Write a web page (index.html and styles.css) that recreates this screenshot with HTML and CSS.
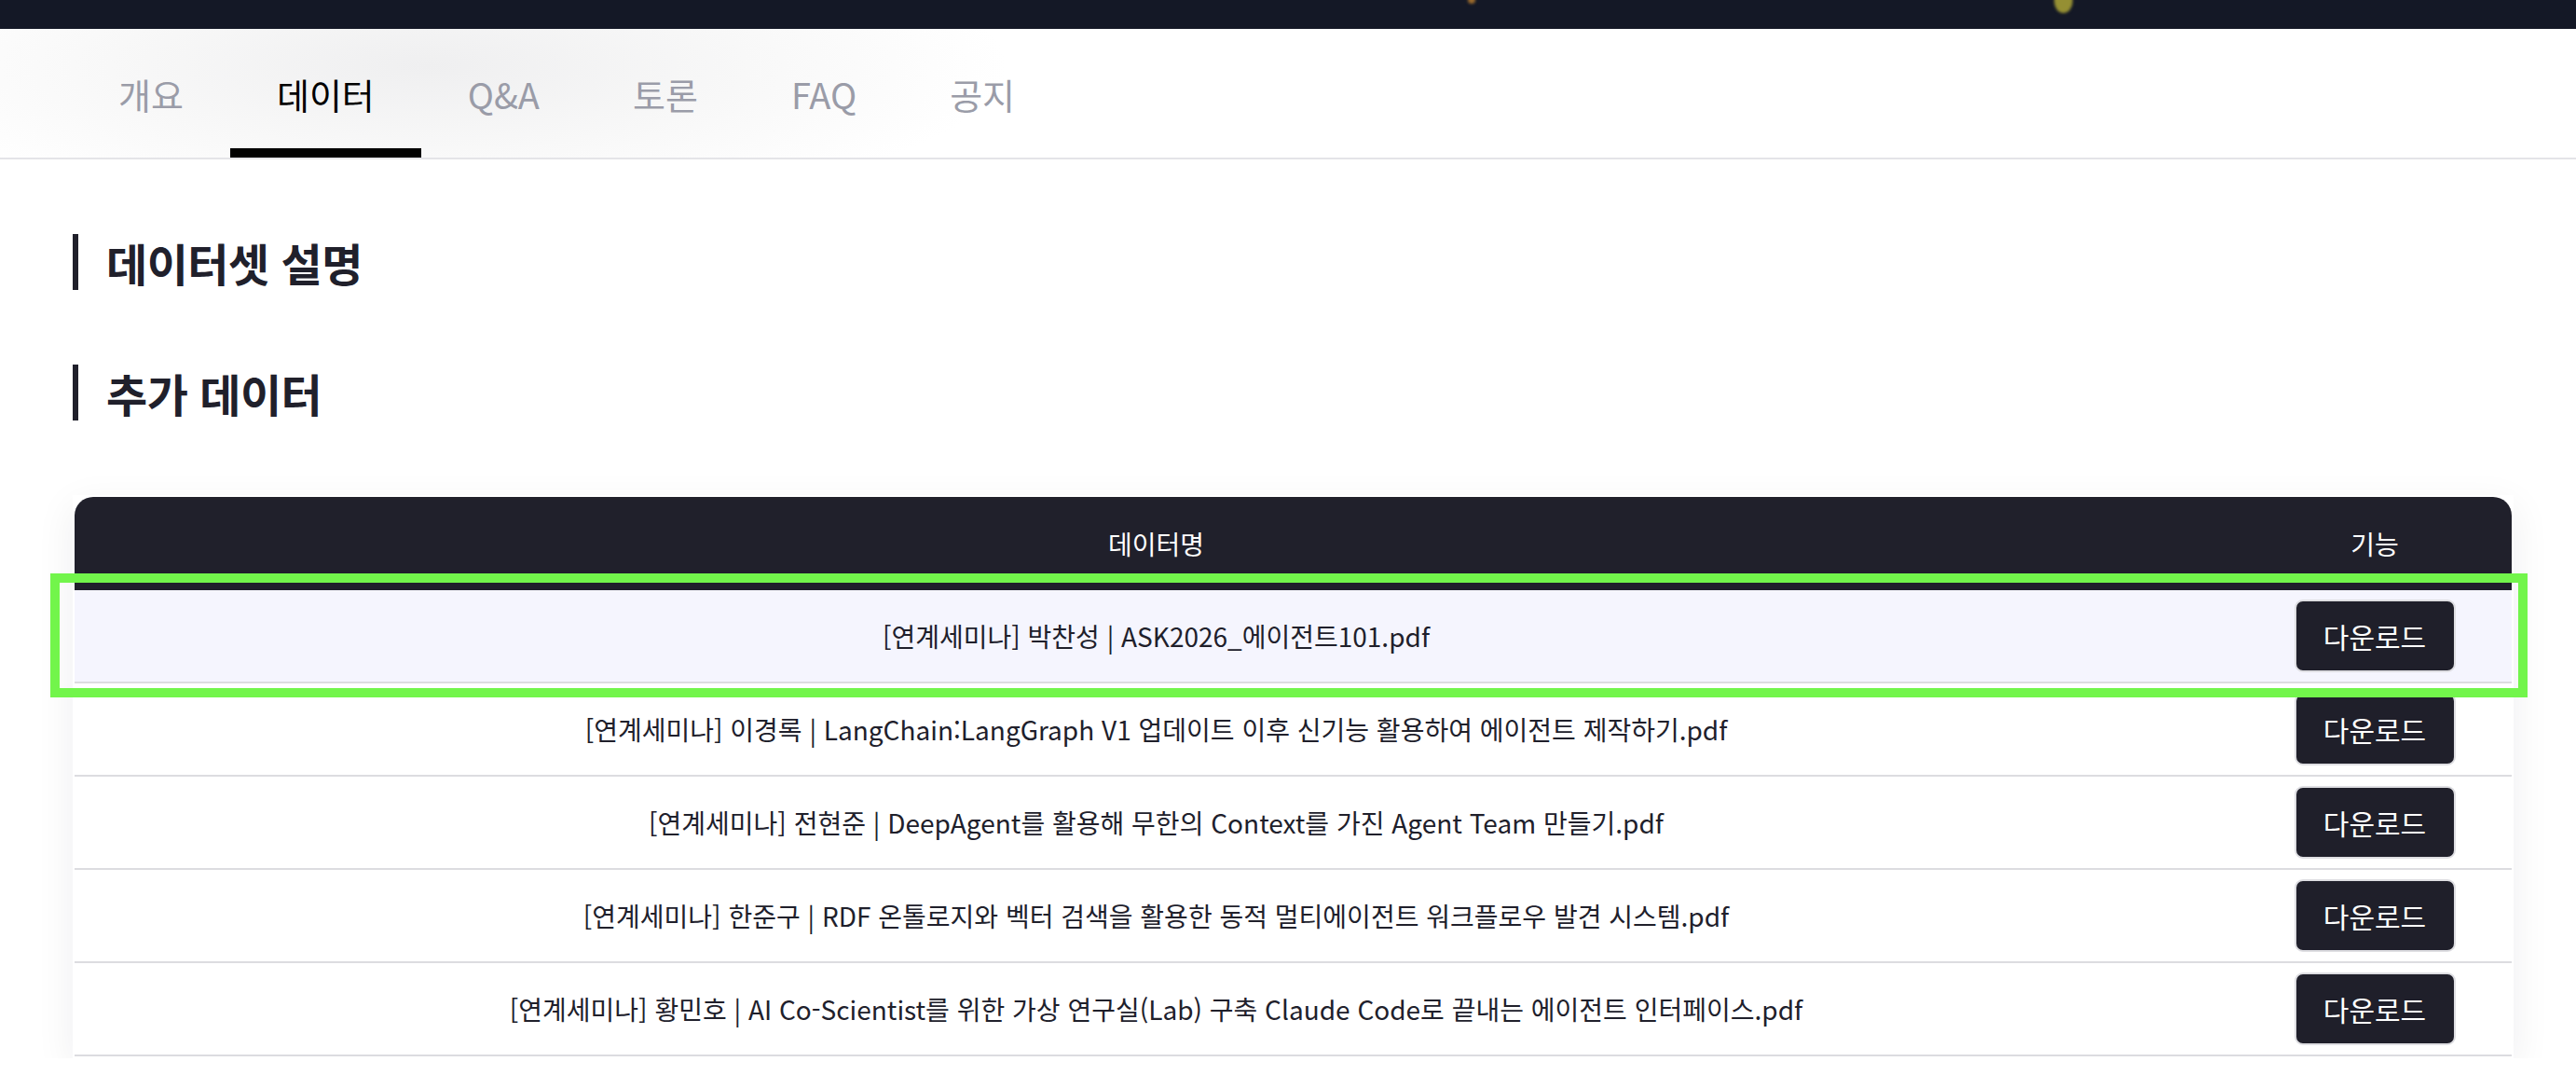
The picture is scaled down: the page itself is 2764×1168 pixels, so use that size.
FILE: index.html
```html
<!DOCTYPE html>
<html lang="ko">
  <head>
    <meta charset="UTF-8" />
    <meta name="viewport" content="width=device-width, initial-scale=1.0" />
    <title>데이터</title>
    <link rel="stylesheet" href="styles.css">
  </head>
  <body>
    <div class="hero">
      <span class="spark spark-orange"></span>
      <span class="spark spark-yellow"></span>
    </div>

    <nav class="tabs">
      <a class="tab" href="#">개요</a>
      <a class="tab active" href="#">데이터</a>
      <a class="tab" href="#">Q&amp;A</a>
      <a class="tab" href="#">토론</a>
      <a class="tab" href="#">FAQ</a>
      <a class="tab" href="#">공지</a>
    </nav>

    <main class="content">
      <h2 class="section-title">데이터셋 설명</h2>
      <h2 class="section-title">추가 데이터</h2>

      <div class="data-card">
        <div class="data-head">
          <div class="cell">데이터명</div>
          <div class="cell">기능</div>
        </div>
        <div class="data-row hover">
          <div class="cell">[연계세미나] 박찬성 | ASK2026_에이전트101.pdf</div>
          <div class="cell"><button class="btn">다운로드</button></div>
        </div>
        <div class="data-row">
          <div class="cell">[연계세미나] 이경록 | LangChain:LangGraph V1 업데이트 이후 신기능 활용하여 에이전트 제작하기.pdf</div>
          <div class="cell"><button class="btn">다운로드</button></div>
        </div>
        <div class="data-row">
          <div class="cell">[연계세미나] 전현준 | DeepAgent를 활용해 무한의 Context를 가진 Agent Team 만들기.pdf</div>
          <div class="cell"><button class="btn">다운로드</button></div>
        </div>
        <div class="data-row">
          <div class="cell">[연계세미나] 한준구 | RDF 온톨로지와 벡터 검색을 활용한 동적 멀티에이전트 워크플로우 발견 시스템.pdf</div>
          <div class="cell"><button class="btn">다운로드</button></div>
        </div>
        <div class="data-row">
          <div class="cell">[연계세미나] 황민호 | AI Co-Scientist를 위한 가상 연구실(Lab) 구축 Claude Code로 끝내는 에이전트 인터페이스.pdf</div>
          <div class="cell"><button class="btn">다운로드</button></div>
        </div>
      </div>
    </main>

    <!-- 선택된 행 표시 -->
    <div class="highlight"></div>
  </body>
</html>
```

FILE: styles.css
```css
body {
  margin: 0;
  padding: 0;
  background-color: #ffffff;
  font-family: "Noto Sans CJK KR", "Noto Sans", sans-serif;
  color: #20202b;
  overflow: hidden;
}

/* 상단 배너 끝부분 */
.hero {
  position: relative;
  height: 31px;
  background-color: #141826;
  overflow: hidden;
}

.spark {
  position: absolute;
  border-radius: 50%;
  filter: blur(1.5px);
}

.spark-orange {
  left: 1575px;
  top: -4px;
  width: 8px;
  height: 8px;
  background-color: #9a6a2c;
}

.spark-yellow {
  left: 2204px;
  top: -12px;
  width: 20px;
  height: 26px;
  background-color: #958f33;
}

/* 탭 메뉴 */
.tabs {
  display: flex;
  height: 138px;
  padding-left: 77px;
  border-bottom: 2px solid #e4e4e8;
  background: radial-gradient(ellipse 620px 160px at 460px 40px, #efeff0 0%, #f8f8f8 55%, rgba(255, 255, 255, 0) 100%);
}

.tab {
  display: flex;
  align-items: center;
  padding: 0 50px;
  border-top: 10px solid transparent;
  border-bottom: 10px solid transparent;
  font-size: 38px;
  color: #9a9ca8;
  text-decoration: none;
}

.tab.active {
  color: #000000;
  border-bottom-color: #000000;
}

/* 본문 */
.content {
  padding: 80px 67px 0 78px;
}

.section-title {
  margin: 0 0 80px;
  height: 60px;
  display: flex;
  align-items: center;
  padding-left: 30px;
  border-left: 6px solid #20202b;
  font-size: 48px;
  font-weight: 700;
  letter-spacing: -0.5px;
  color: #20202b;
}

.data-card {
  padding: 2px;
  background-color: #ffffff;
  box-shadow: 0 12px 40px rgba(20, 24, 40, 0.07);
}

.data-head,
.data-row {
  display: grid;
  grid-template-columns: 1fr 294px;
  height: 100px;
}

.data-head {
  background-color: #20202b;
  color: #ffffff;
  border-radius: 20px 20px 0 0;
}

.data-row {
  box-sizing: border-box;
  border-bottom: 2px solid #dcdce0;
  background-color: #ffffff;
}

.data-row.hover {
  background-color: #f5f5fe;
}

.cell {
  display: flex;
  align-items: center;
  justify-content: center;
  font-size: 28px;
}

.btn {
  width: 173px;
  height: 78px;
  border: 2px solid #dedee2;
  border-radius: 9px;
  background-color: #1f1f2a;
  color: #ffffff;
  font-family: inherit;
  font-size: 30px;
  cursor: pointer;
}

/* 선택 표시 박스 */
.highlight {
  position: absolute;
  left: 54px;
  top: 615px;
  width: 2658px;
  height: 133px;
  box-sizing: border-box;
  border: 10px solid #72f54b;
  pointer-events: none;
}
```
